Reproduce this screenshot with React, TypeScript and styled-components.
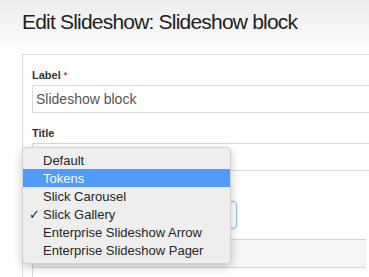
import React from 'react';
import styled, { createGlobalStyle } from 'styled-components';

const GlobalStyle = createGlobalStyle`
    html, body {
        margin: 0;
        padding: 0;
        overflow: hidden;
    }
    body {
        background: linear-gradient(#ececec 0px, #ffffff 54px);
        font-family: 'Liberation Sans', Arial, sans-serif;
        color: #333;
    }
`;

const skins = ['Default', 'Tokens', 'Slick Carousel', 'Slick Gallery', 'Enterprise Slideshow Arrow', 'Enterprise Slideshow Pager'];

const App: React.FC = () => (
    <Page>
        <GlobalStyle />
        <Title>Edit Slideshow: Slideshow block</Title>

        <Card>
            <FormItem>
                <Label>
                    Label <Required>*</Required>
                </Label>
                <TextInput>Slideshow block</TextInput>
            </FormItem>

            <FormItem>
                <Label>Title</Label>
                <TextInput />
            </FormItem>

            <FormItem>
                <Label />
                <SelectBox focused />
            </FormItem>

            <Details>
                <Summary />
                <DetailsBody />
            </Details>
        </Card>

        <Popup>
            {skins.map(skin => (
                <Option key={skin} active={skin === 'Tokens'}>
                    <Check>{skin === 'Slick Gallery' ? '✓' : ''}</Check>
                    {skin}
                </Option>
            ))}
        </Popup>
    </Page>
);

export default App;

const Page = styled.div`
    position: relative;
    width: 369px;
    height: 277px;
    overflow: hidden;
`;

const Title = styled.h1`
    margin: 0;
    padding: 10px 0 0 22px;
    height: 54px;
    box-sizing: border-box;
    font-size: 21px;
    line-height: 24px;
    font-weight: normal;
    letter-spacing: -0.8px;
    color: #222;
`;

const Card = styled.div`
    margin-left: 22px;
    width: 400px;
    height: 223px;
    border: 1px solid #dcdcdc;
    border-bottom: none;
    padding: 13px 0 0 9px;
    box-sizing: border-box;
    background: #fff;
`;

const FormItem = styled.div`
    display: flex;
    flex-direction: column;
    margin-bottom: 13px;
`;

const Label = styled.div`
    height: 14px;
    font-size: 11px;
    line-height: 14px;
    font-weight: bold;
    color: #333;
    margin-bottom: 3px;
`;

const Required = styled.span`
    color: #e8336b;
    font-size: 9px;
    vertical-align: top;
`;

const TextInput = styled.div`
    height: 28px;
    box-sizing: border-box;
    border: 1px solid #d8d8d8;
    padding: 0 3px;
    font-size: 14px;
    line-height: 26px;
    color: #555;
`;

const SelectBox = styled.div<{ focused?: boolean }>`
    width: 205px;
    height: 28px;
    box-sizing: border-box;
    border: 1px solid ${p => (p.focused ? '#8fbcef' : '#ccc')};
    border-radius: 4px;
    box-shadow: ${p => (p.focused ? '0 0 2px rgba(80, 150, 240, 0.4)' : 'none')};
`;

const Details = styled.div`
    width: 333px;
    margin-top: -3px;
    border-left: 1px solid #d8d8d8;
`;

const Summary = styled.div`
    height: 27px;
    background: #f5f5f5;
    border-top: 1px solid #d4d4d4;
    border-bottom: 1px solid #d4d4d4;
`;

const DetailsBody = styled.div`
    height: 20px;
    background: #fff;
`;

const Popup = styled.div`
    position: absolute;
    left: 22px;
    top: 147px;
    width: 209px;
    box-sizing: border-box;
    padding: 3px 0 4px;
    background: #eeeeee;
    border: 1px solid rgba(0, 0, 0, 0.12);
    border-radius: 5px;
    box-shadow: 0 3px 10px rgba(0, 0, 0, 0.22);
`;

const Option = styled.div<{ active?: boolean }>`
    display: flex;
    align-items: center;
    height: 18px;
    font-size: 13px;
    color: ${p => (p.active ? '#fff' : '#262626')};
    background: ${p => (p.active ? '#4f9bf9' : 'transparent')};
`;

const Check = styled.span`
    width: 20px;
    padding-left: 6px;
    box-sizing: border-box;
    font-size: 13px;
`;
